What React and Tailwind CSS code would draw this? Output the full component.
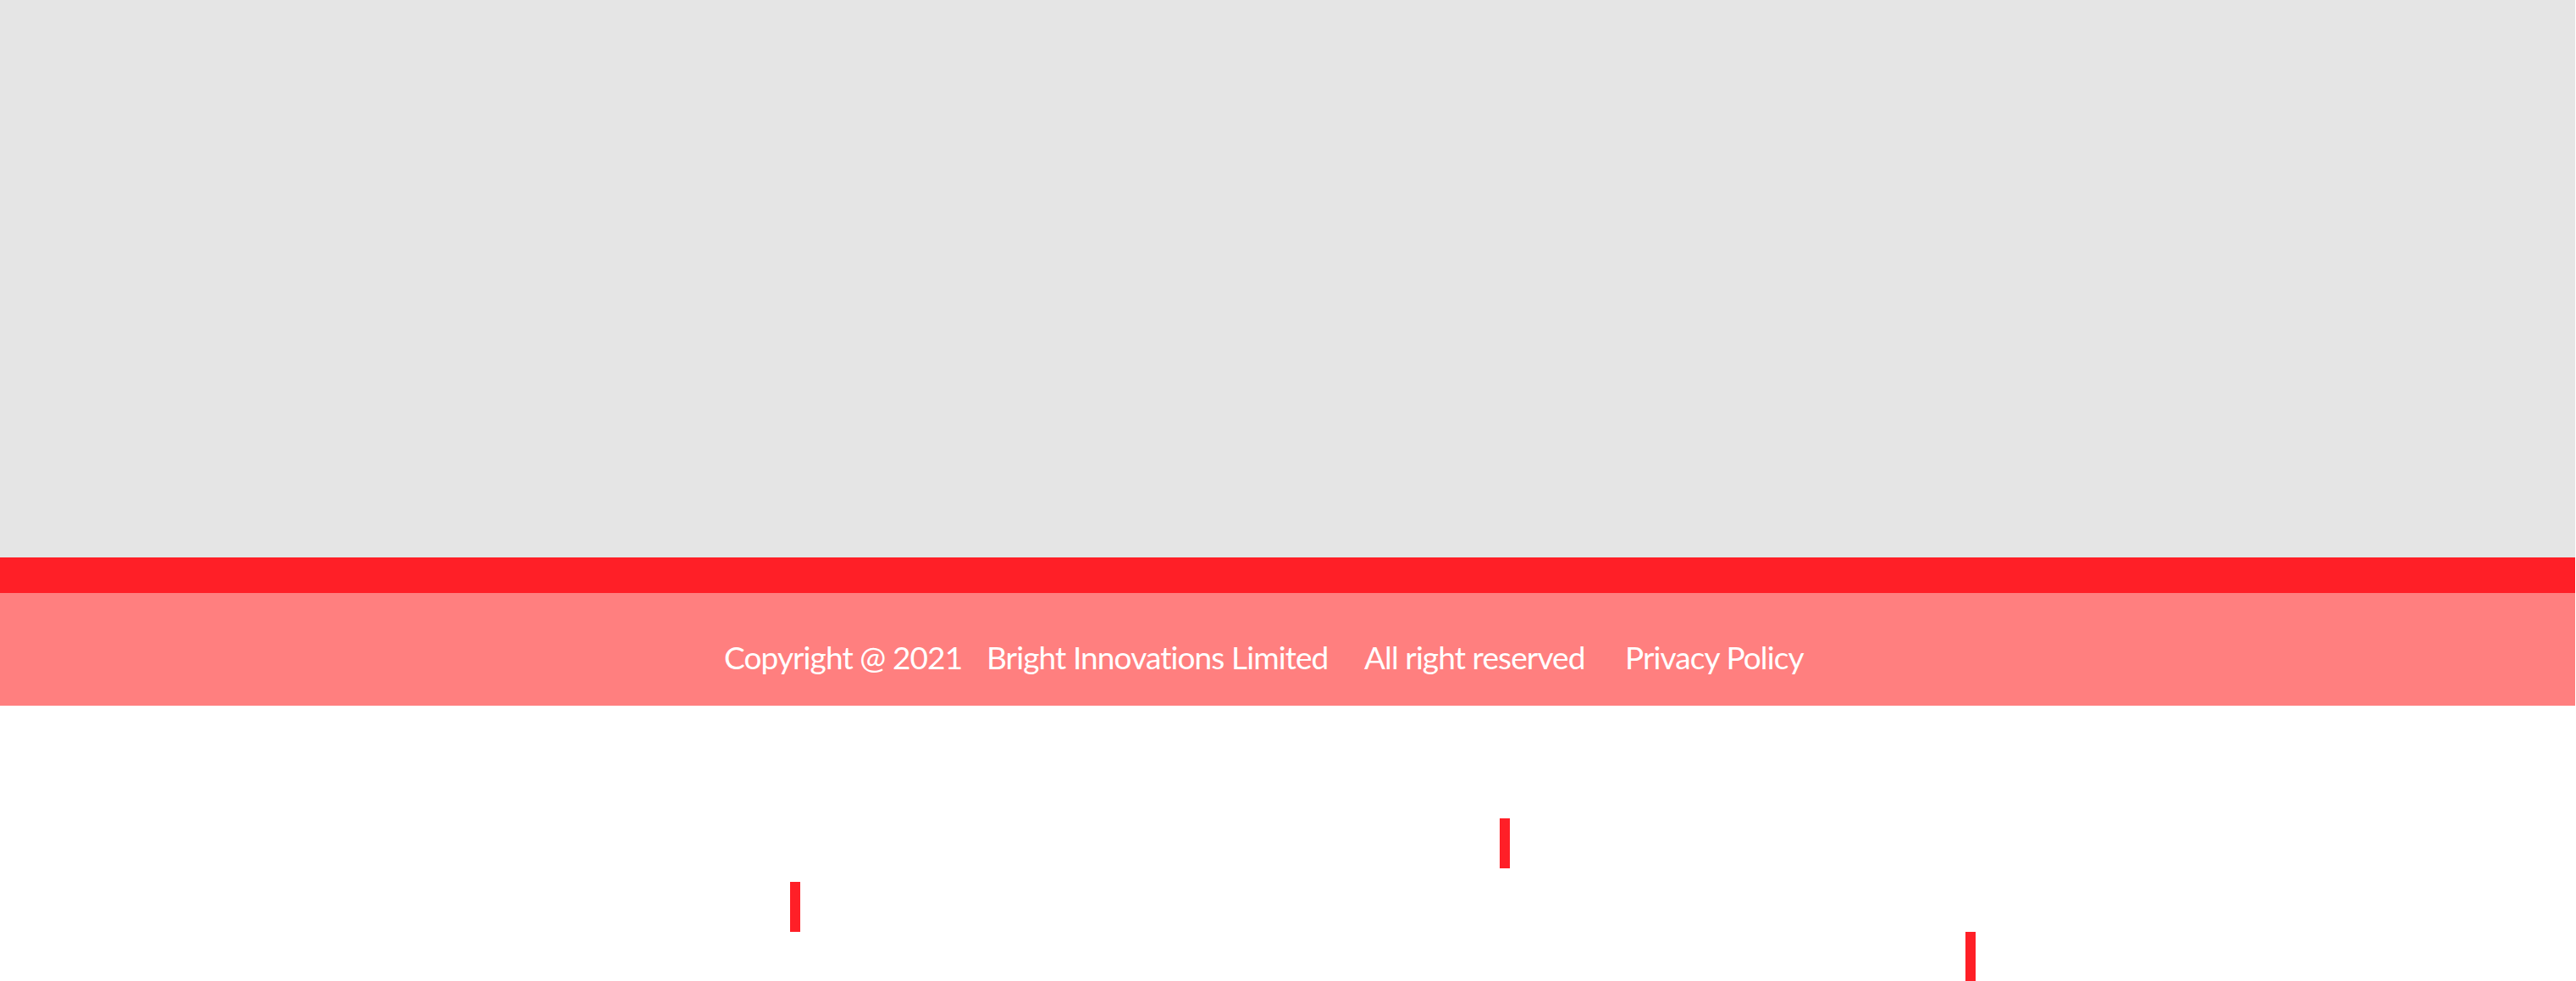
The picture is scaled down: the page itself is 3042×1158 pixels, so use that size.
export default function App() {
  return (
    <div className="w-[3041px] bg-white" style={{ fontFamily: 'Lato, "Open Sans", sans-serif' }}>
      <div className="h-[658px] bg-[#e5e5e5]" />
      <div className="h-[42px] bg-[#ff1f27]" />
      <footer className="h-[133px] bg-[#ff7f7f] pt-[57px]">
        <div className="flex pl-[855px] text-[37px] leading-[37px] tracking-[-0.9px] text-white whitespace-nowrap">
          <span className="w-[310px]">Copyright @ 2021</span>
          <span className="w-[446px]">Bright Innovations Limited</span>
          <span className="w-[308px]">All right reserved</span>
          <span>Privacy Policy</span>
        </div>
      </footer>
      <div className="relative h-[325px]">
        <div className="absolute left-[933px] top-[208px] h-[59px] w-[12px] bg-[#ff1f27]" />
        <div className="absolute left-[1771px] top-[133px] h-[59px] w-[12px] bg-[#ff1f27]" />
        <div className="absolute left-[2321px] top-[267px] h-[59px] w-[12px] bg-[#ff1f27]" />
      </div>
    </div>
  );
}
